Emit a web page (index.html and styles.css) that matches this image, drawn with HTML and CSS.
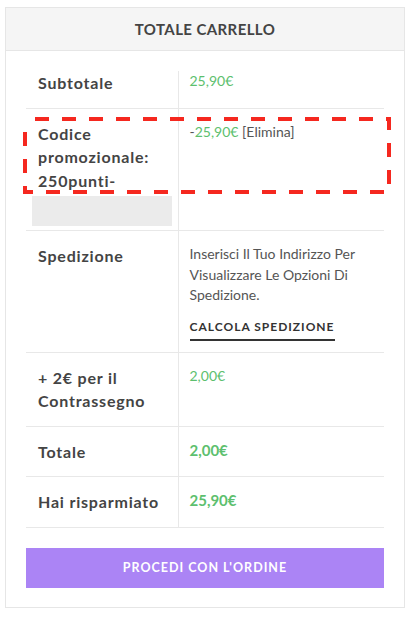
FILE: index.html
```html
<!DOCTYPE html>
<html lang="it">
<head>
<meta charset="utf-8">
<title>Totale carrello</title>
<link rel="stylesheet" href="styles.css">
</head>
<body>
<div class="cart">
  <div class="cart-head"><h2 class="cart-title">TOTALE CARRELLO</h2></div>
  <div class="cart-body">
    <table class="totals">
      <tbody>
        <tr class="row-first">
          <th>Subtotale</th>
          <td><span class="price">25,90€</span></td>
        </tr>
        <tr class="row-promo">
          <th>Codice promozionale: 250punti-<div class="redact"></div></th>
          <td>-<span class="price">25,90€</span> <a class="remove">[Elimina]</a></td>
        </tr>
        <tr>
          <th>Spedizione</th>
          <td>
            <div class="ship">
              <p class="ship-note">Inserisci Il Tuo Indirizzo Per Visualizzare Le Opzioni Di Spedizione.</p>
              <a class="ship-calc">CALCOLA SPEDIZIONE</a>
            </div>
          </td>
        </tr>
        <tr>
          <th>+ 2€ per il Contrassegno</th>
          <td><span class="price">2,00€</span></td>
        </tr>
        <tr>
          <th>Totale</th>
          <td><strong class="price price-strong">2,00€</strong></td>
        </tr>
        <tr>
          <th>Hai risparmiato</th>
          <td><strong class="price price-strong">25,90€</strong></td>
        </tr>
      </tbody>
    </table>
    <a class="checkout">PROCEDI CON L'ORDINE</a>
  </div>
  <svg class="highlight" width="368" height="77" viewBox="0 0 368 77" aria-hidden="true">
    <rect x="2" y="2" width="364" height="73" fill="none" stroke="#f5281f" stroke-width="4" stroke-dasharray="14 13" stroke-dashoffset="17"/>
  </svg>
</div>
</body>
</html>
```

FILE: styles.css
```css
* { box-sizing: border-box; }

body {
  margin: 0;
  background: #ffffff;
  font-family: Lato, "Open Sans", "Liberation Sans", sans-serif;
  color: #555555;
}

.cart {
  position: relative;
  margin: 7px 9px 0 5px;
  border: 1px solid #e6e6e6;
}

.cart-head {
  height: 43px;
  background: #f5f5f5;
  border-bottom: 1px solid #e6e6e6;
  display: flex;
  align-items: center;
  justify-content: center;
}

.cart-title {
  margin: 0;
  font-size: 15px;
  font-weight: 700;
  letter-spacing: 0.4px;
  color: #444444;
}

.cart-body {
  padding: 20px 20px 19px;
}

.totals {
  width: 100%;
  border-collapse: collapse;
  table-layout: fixed;
}

.totals th {
  width: 152px;
  text-align: left;
  vertical-align: top;
  padding: 13px 12px;
  font-size: 16px;
  font-weight: 700;
  letter-spacing: 0.8px;
  line-height: 23.5px;
  color: #444444;
  border-bottom: 1px solid #e8e8e8;
}

.totals td {
  vertical-align: top;
  padding: 13px 12px 13px 11px;
  font-size: 14px;
  line-height: 20px;
  color: #555555;
  border-left: 1px solid #e8e8e8;
  border-bottom: 1px solid #e8e8e8;
}

.row-first th,
.row-first td {
  padding-top: 0;
}

.row-promo th {
  padding-bottom: 4px;
}

.redact {
  width: 140px;
  height: 30px;
  margin: 4px 0 0 -6px;
  background: #ebebeb;
}

.price {
  color: #5dbf6e;
}

.price-strong {
  font-size: 15px;
  font-weight: 700;
}

.remove {
  color: #555555;
}

.ship {
  display: flex;
  flex-direction: column;
  align-items: flex-start;
}

.ship-note {
  margin: 0;
  line-height: 20.5px;
}

.ship-calc {
  margin: 13px 0 -2px;
  padding-bottom: 4px;
  border-bottom: 2px solid #333333;
  font-size: 12px;
  font-weight: 700;
  letter-spacing: 1px;
  line-height: 16px;
  color: #333333;
}

.checkout {
  display: flex;
  align-items: center;
  justify-content: center;
  height: 40px;
  margin-top: 20px;
  background: #ab84f5;
  color: #ffffff;
  font-size: 12.5px;
  font-weight: 700;
  letter-spacing: 1px;
}

.highlight {
  position: absolute;
  left: 17px;
  top: 109px;
  pointer-events: none;
}
```
